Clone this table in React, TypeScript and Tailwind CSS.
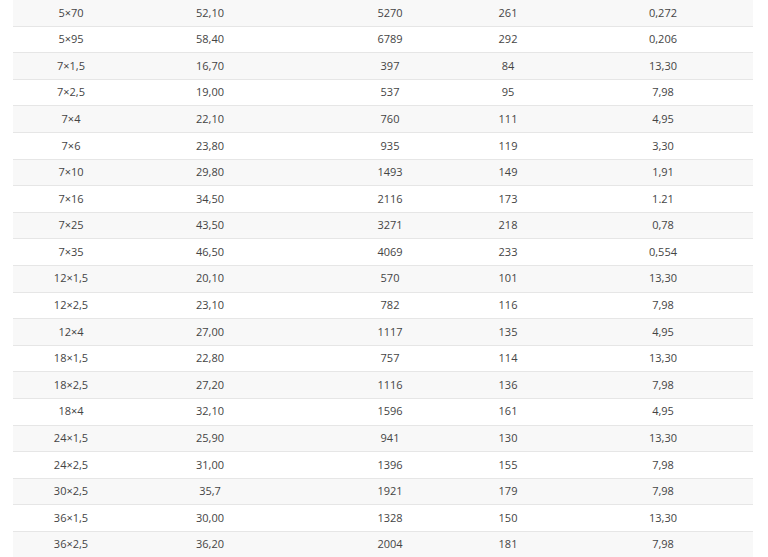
import React from "react";

const rows: [string, string, string, string, string][] = [
  ["5×70", "52,10", "5270", "261", "0,272"],
  ["5×95", "58,40", "6789", "292", "0,206"],
  ["7×1,5", "16,70", "397", "84", "13,30"],
  ["7×2,5", "19,00", "537", "95", "7,98"],
  ["7×4", "22,10", "760", "111", "4,95"],
  ["7×6", "23,80", "935", "119", "3,30"],
  ["7×10", "29,80", "1493", "149", "1,91"],
  ["7×16", "34,50", "2116", "173", "1.21"],
  ["7×25", "43,50", "3271", "218", "0,78"],
  ["7×35", "46,50", "4069", "233", "0,554"],
  ["12×1,5", "20,10", "570", "101", "13,30"],
  ["12×2,5", "23,10", "782", "116", "7,98"],
  ["12×4", "27,00", "1117", "135", "4,95"],
  ["18×1,5", "22,80", "757", "114", "13,30"],
  ["18×2,5", "27,20", "1116", "136", "7,98"],
  ["18×4", "32,10", "1596", "161", "4,95"],
  ["24×1,5", "25,90", "941", "130", "13,30"],
  ["24×2,5", "31,00", "1396", "155", "7,98"],
  ["30×2,5", "35,7", "1921", "179", "7,98"],
  ["36×1,5", "30,00", "1328", "150", "13,30"],
  ["36×2,5", "36,20", "2004", "181", "7,98"],
];

export default function App() {
  return (
    <div
      className="w-[768px] h-[557px] overflow-hidden bg-white pl-[13px] pr-[15px]"
      style={{ fontFamily: '"Open Sans", "Noto Sans", sans-serif' }}
    >
      <div className="w-[740px]">
        {rows.map((r, i) => (
          <div
            key={i}
            className={`grid grid-cols-[116px_162px_198px_38px_226px] items-center h-[26.6px] border-b border-[#e6e6e6] text-[11px] text-[#444] ${
              i % 2 === 0 ? "bg-[#f8f8f8]" : "bg-white"
            }`}
          >
            <div className="text-center">{r[0]}</div>
            <div className="text-center">{r[1]}</div>
            <div className="text-center">{r[2]}</div>
            <div className="text-center">{r[3]}</div>
            <div className="text-center pl-[46px]">{r[4]}</div>
          </div>
        ))}
      </div>
    </div>
  );
}
